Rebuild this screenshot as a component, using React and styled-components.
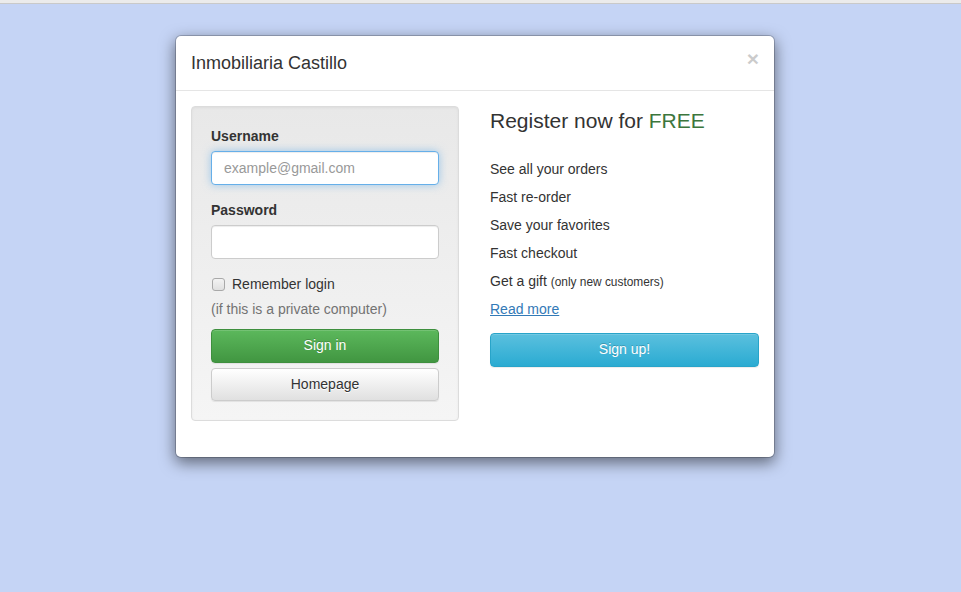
import React from "react";
import styled, { createGlobalStyle } from "styled-components";

const Global = createGlobalStyle`
  html, body { margin: 0; padding: 0; }
  body {
    background: #c5d4f5;
    font-family: "Liberation Sans", Arial, sans-serif;
    font-size: 14px;
    line-height: 1.42857;
    color: #333;
  }
  * { box-sizing: border-box; }
`;

const TopStrip = styled.div`
  height: 4px;
  background: #ebebeb;
  border-bottom: 1px solid #c9c9c9;
`;

const Page = styled.div`
  padding: 31px 0 0 175px;
  min-height: 588px;
`;

const Modal = styled.div`
  width: 600px;
  background: #fff;
  border: 1px solid rgba(0, 0, 0, 0.2);
  border-radius: 6px;
  box-shadow: 0 5px 15px rgba(0, 0, 0, 0.5);
  background-clip: padding-box;
`;

const Header = styled.div`
  display: flex;
  align-items: center;
  justify-content: space-between;
  padding: 15px;
  border-bottom: 1px solid #e5e5e5;
`;

const Title = styled.h4`
  margin: 0;
  font-size: 18px;
  font-weight: 400;
  line-height: 24px;
  color: #333;
`;

const Close = styled.button`
  border: 0;
  background: transparent;
  padding: 0;
  margin: -10px 0 0 0;
  font-family: "Liberation Sans", Arial, sans-serif;
  font-size: 21px;
  font-weight: 700;
  line-height: 1;
  color: #000;
  opacity: 0.2;
  text-shadow: 0 1px 0 #fff;
  cursor: pointer;
`;

const Body = styled.div`
  display: grid;
  grid-template-columns: 268px 269px;
  column-gap: 31px;
  padding: 15px 15px 36px 15px;
`;

const Well = styled.div`
  background: linear-gradient(to bottom, #e8e8e8 0%, #f5f5f5 100%);
  border: 1px solid #dcdcdc;
  border-radius: 4px;
  padding: 19px;
  box-shadow: inset 0 1px 3px rgba(0, 0, 0, 0.05), 0 1px 0 rgba(255, 255, 255, 0.1);
`;

const FormGroup = styled.div`
  margin-bottom: 15px;
  display: flex;
  flex-direction: column;
`;

const Label = styled.label`
  font-weight: 700;
  margin-bottom: 5px;
  line-height: 20px;
`;

const Input = styled.input`
  height: 34px;
  width: 100%;
  padding: 6px 12px;
  font-family: "Liberation Sans", Arial, sans-serif;
  font-size: 14px;
  color: #555;
  background: #fff;
  border: 1px solid ${(p) => (p.$focus ? "#66afe9" : "#ccc")};
  border-radius: 4px;
  outline: 0;
  box-shadow: ${(p) =>
    p.$focus
      ? "inset 0 1px 1px rgba(0,0,0,.075), 0 0 8px rgba(102,175,233,.6)"
      : "inset 0 1px 1px rgba(0,0,0,.075)"};
  &::placeholder { color: #999; }
`;

const CheckRow = styled.label`
  display: flex;
  align-items: center;
  gap: 7px;
  line-height: 20px;
  font-weight: 400;
`;

const Check = styled.span`
  width: 13px;
  height: 13px;
  border: 1px solid #a9a9a9;
  border-radius: 3px;
  background: linear-gradient(#f3f3f3, #e0e0e0);
  margin-left: 1px;
`;

const Help = styled.p`
  margin: 5px 0 10px;
  color: #737373;
  line-height: 20px;
`;

const Btn = styled.button`
  display: block;
  width: 100%;
  height: ${(p) => p.$h || 34}px;
  padding: 6px 12px;
  font-family: "Liberation Sans", Arial, sans-serif;
  font-size: 14px;
  line-height: 1.42857;
  border-radius: 4px;
  cursor: pointer;
  box-shadow: inset 0 1px 0 rgba(255, 255, 255, 0.15), 0 1px 1px rgba(0, 0, 0, 0.075);
  ${(p) =>
    p.$variant === "success"
      ? `color:#fff;background:linear-gradient(to bottom,#5cb85c 0%,#419641 100%);border:1px solid #3e8f3e;text-shadow:0 -1px 0 rgba(0,0,0,.2);`
      : p.$variant === "info"
      ? `color:#fff;background:linear-gradient(to bottom,#5bc0de 0%,#2aabd2 100%);border:1px solid #28a4c9;text-shadow:0 -1px 0 rgba(0,0,0,.2);`
      : `color:#333;background:linear-gradient(to bottom,#fff 0%,#e0e0e0 100%);border:1px solid #ccc;text-shadow:0 1px 0 #fff;`}
  & + & { margin-top: 5px; }
`;

const Lead = styled.p`
  margin: 0 0 20px;
  font-size: 21px;
  font-weight: 300;
  line-height: 1.4;
`;

const Free = styled.span`
  color: #3c763d;
`;

const List = styled.ul`
  list-style: none;
  margin: 0 0 10px;
  padding: 0;
`;

const Item = styled.li`
  height: 28px;
  padding: 4px 0;
  line-height: 20px;
`;

const Small = styled.small`
  font-size: 85%;
`;

const Link = styled.a`
  color: #337ab7;
  text-decoration: underline;
`;

export default function App() {
  return (
    <>
      <Global />
      <TopStrip />
      <Page>
        <Modal>
          <Header>
            <Title>Inmobiliaria Castillo</Title>
            <Close aria-label="Close">×</Close>
          </Header>
          <Body>
            <Well>
              <FormGroup>
                <Label>Username</Label>
                <Input $focus placeholder="example@gmail.com" />
              </FormGroup>
              <FormGroup>
                <Label>Password</Label>
                <Input type="password" />
              </FormGroup>
              <CheckRow>
                <Check />
                Remember login
              </CheckRow>
              <Help>(if this is a private computer)</Help>
              <Btn $variant="success">Sign in</Btn>
              <Btn $h={33}>Homepage</Btn>
            </Well>
            <div>
              <Lead>
                Register now for <Free>FREE</Free>
              </Lead>
              <List>
                <Item>See all your orders</Item>
                <Item>Fast re-order</Item>
                <Item>Save your favorites</Item>
                <Item>Fast checkout</Item>
                <Item>
                  Get a gift <Small>(only new customers)</Small>
                </Item>
                <Item>
                  <Link href="#">Read more</Link>
                </Item>
              </List>
              <Btn $variant="info">Sign up!</Btn>
            </div>
          </Body>
        </Modal>
      </Page>
    </>
  );
}
